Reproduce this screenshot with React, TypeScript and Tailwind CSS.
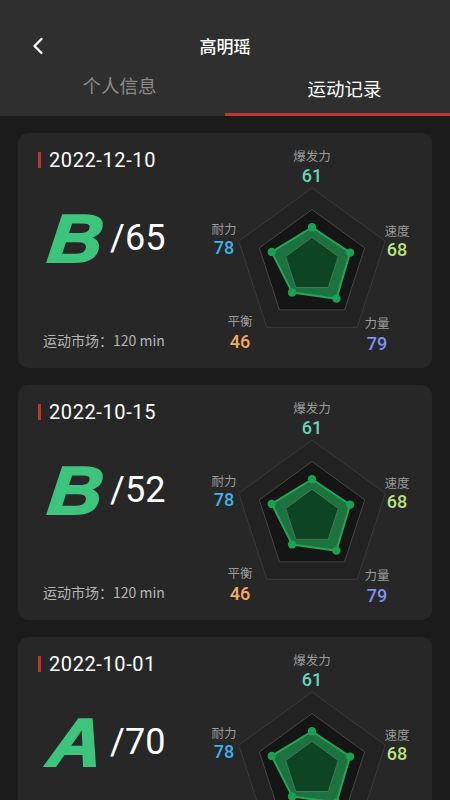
import { ChevronLeft } from 'lucide-react';

type Record = {
  date: string;
  grade: string;
  score: number;
};

const records: Record[] = [
  { date: '2022-12-10', grade: 'B', score: 65 },
  { date: '2022-10-15', grade: 'B', score: 52 },
  { date: '2022-10-01', grade: 'A', score: 70 },
];

// order: top, right, bottom-right, bottom-left, left
const stats = [
  { label: '爆发力', value: 61, color: '#63d6b4', r: 0.49, lx: 107, ly: 16, vy: 37 },
  { label: '速度', value: 68, color: '#b7e27c', r: 0.52, lx: 192, ly: 91, vy: 111 },
  { label: '力量', value: 79, color: '#7f90f2', r: 0.54, lx: 172, ly: 183, vy: 205 },
  { label: '平衡', value: 46, color: '#f3aa62', r: 0.44, lx: 35, ly: 181, vy: 203 },
  { label: '耐力', value: 78, color: '#3db3e6', r: 0.55, lx: 19, ly: 89, vy: 109 },
];

const CX = 107;
const CY = 120;
const R = 77;

function pt(i: number, r: number) {
  const a = ((-90 + 72 * i) * Math.PI) / 180;
  return [CX + Math.cos(a) * r, CY + Math.sin(a) * r];
}

function pentagon(r: number) {
  return [0, 1, 2, 3, 4].map((i) => pt(i, r).join(',')).join(' ');
}

function Radar() {
  const data = stats.map((s, i) => pt(i, s.r * R));
  return (
    <svg width="220" height="215" viewBox="0 0 220 215" className="shrink-0">
      <polygon points={pentagon(R)} fill="#222222" stroke="#3a3a3a" strokeWidth="1" />
      <polygon points={pentagon(R * 0.72)} fill="#151515" stroke="#474747" strokeWidth="1" />
      <polygon points={data.map((p) => p.join(',')).join(' ')} fill="#1d7340" stroke="#23a757" strokeWidth="2" strokeLinejoin="round" />
      <polygon points={pentagon(R * 0.36)} fill="#0d4522" stroke="#41795a" strokeWidth="1" />
      {data.map((p, i) => (
        <circle key={i} cx={p[0]} cy={p[1]} r="4.2" fill="#1ba152" />
      ))}
      {stats.map((s) => (
        <g key={s.label}>
          <text
            x={s.lx}
            y={s.ly}
            textAnchor="middle"
            fill="#9a9a9a"
            fontSize="12.5"
            fontFamily="'Noto Sans CJK SC', sans-serif"
          >
            {s.label}
          </text>
          <text
            x={s.lx}
            y={s.vy}
            textAnchor="middle"
            fill={s.color}
            fontSize="18"
            fontWeight="500"
            fontFamily="Roboto, 'Noto Sans', sans-serif"
          >
            {s.value}
          </text>
        </g>
      ))}
    </svg>
  );
}

function RecordCard({ record }: { record: Record }) {
  return (
    <div className="flex h-[235px] shrink-0 rounded-[10px] bg-[#272727] pl-5">
      <div className="flex w-[167px] shrink-0 flex-col">
        <div className="mt-[15px] flex h-6 items-center gap-2">
          <div className="h-4 w-[3px] bg-[#c0352c]" />
          <span className="text-[20px] tracking-[0.6px] text-white [font-family:Roboto,'Noto_Sans',sans-serif]">
            {record.date}
          </span>
        </div>
        <div className="mt-[34px] flex h-[64px] items-center pl-[11px]">
          <span className="origin-left -skew-x-6 scale-x-110 text-[68px] font-bold italic leading-none text-[#3dc47d] [-webkit-text-stroke:2px_#3dc47d] [font-family:'Liberation_Sans',Arial,sans-serif]">
            {record.grade}
          </span>
          <span className="ml-[12px] text-[36px] leading-none text-white [font-family:Roboto,'Liberation_Sans',sans-serif]">
            /{record.score}
          </span>
        </div>
        <div className="mt-[60px] pl-[5px] text-[14px] text-[#b4b4b4] [font-family:'Noto_Sans_CJK_SC',sans-serif]">
          运动市场：120 min
        </div>
      </div>
      <div className="mt-3">
        <Radar />
      </div>
    </div>
  );
}

export default function App() {
  return (
    <div className="flex h-[800px] w-[450px] flex-col overflow-hidden bg-[#1b1b1b] [font-family:'Noto_Sans_CJK_SC',sans-serif]">
      <div className="shrink-0 bg-[#2f2f2f] pt-5">
        <div className="relative flex h-[52px] items-center justify-center">
          <ChevronLeft className="absolute left-[24px] h-7 w-7 text-white" strokeWidth={2} />
          <span className="text-[17px] font-medium text-white">高明瑶</span>
        </div>
        <div className="flex h-[44px]">
          <div className="flex flex-1 flex-col items-center justify-between">
            <span className="pl-[14px] text-[18.5px] leading-[26px] text-[#8a8a8a]">个人信息</span>
            <div className="h-[3px]" />
          </div>
          <div className="flex flex-1 flex-col items-center justify-between">
            <span className="pl-[14px] pt-[3px] text-[18.5px] leading-[26px] text-white">运动记录</span>
            <div className="h-[3px] w-full bg-[#b8372f]" />
          </div>
        </div>
      </div>
      <div className="flex flex-col gap-[17px] px-[18px] pt-[17px]">
        {records.map((r) => (
          <RecordCard key={r.date} record={r} />
        ))}
      </div>
    </div>
  );
}
